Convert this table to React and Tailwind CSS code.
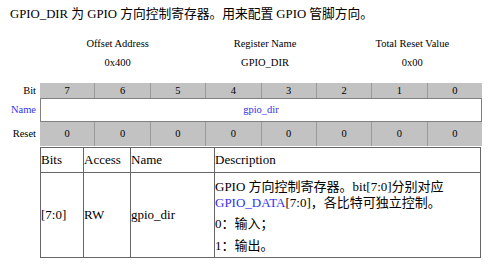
const FONT = { fontFamily: '"Liberation Serif", "Noto Sans CJK SC", serif' };

const BITS = [7, 6, 5, 4, 3, 2, 1, 0];

function GrayRow({ label, values, className }) {
  return (
    <div className={`flex ${className}`}>
      <div className="flex w-[40px] items-center justify-end pr-[4px] text-[10.5px] text-black">{label}</div>
      <div className="flex w-[442px] bg-[#c2c2c2]">
        {values.map((v, i) => (
          <div
            key={i}
            className={`flex flex-1 items-center justify-center text-[10.5px] text-black ${i > 0 ? 'border-l border-l-[#9a9a9a]' : ''}`}
          >
            {v}
          </div>
        ))}
      </div>
    </div>
  );
}

export default function App() {
  return (
    <div className="h-[269px] w-[500px] overflow-hidden bg-white text-black" style={FONT}>
      <div className="pl-[10px] pt-[6px] text-[12.75px] leading-[16px]">
        GPIO_DIR 为 GPIO 方向控制寄存器。用来配置 GPIO 管脚方向。
      </div>

      <div className="ml-[44px] mt-[15px] grid w-[442px] grid-cols-3 text-center text-[10.5px] leading-[14px]">
        <div>Offset Address</div>
        <div>Register Name</div>
        <div>Total Reset Value</div>
        <div className="mt-[5px]">0x400</div>
        <div className="mt-[5px]">GPIO_DIR</div>
        <div className="mt-[5px]">0x00</div>
      </div>

      <div className="mt-[13px]">
        <GrayRow label="Bit" values={BITS} className="h-[15px]" />
        <div className="flex h-[24px]">
          <div className="flex w-[40px] items-center justify-end pr-[4px] text-[10.5px] text-[#3232f0]">Name</div>
          <div className="flex w-[442px] items-center justify-center border border-[#808080] bg-white text-[10.5px] text-[#3232f0]">
            gpio_dir
          </div>
        </div>
        <GrayRow label="Reset" values={BITS.map(() => 0)} className="h-[24px]" />
      </div>

      <table className="ml-[40px] mt-[1px] w-[440px] table-fixed border-collapse text-[13px] leading-[16px]">
        <colgroup>
          <col className="w-[43px]" />
          <col className="w-[47px]" />
          <col className="w-[84px]" />
          <col className="w-[266px]" />
        </colgroup>
        <thead>
          <tr className="h-[25px]">
            <th className="border border-[#666666] px-0 text-left font-normal">Bits</th>
            <th className="border border-[#666666] px-0 text-left font-normal">Access</th>
            <th className="border border-[#666666] px-0 text-left font-normal">Name</th>
            <th className="border border-[#666666] px-0 text-left font-normal">Description</th>
          </tr>
        </thead>
        <tbody>
          <tr className="h-[85px]">
            <td className="border border-[#666666] align-middle">[7:0]</td>
            <td className="border border-[#666666] align-middle">RW</td>
            <td className="border border-[#666666] align-middle">gpio_dir</td>
            <td className="border border-[#666666] align-top">
              <div className="pt-[6px]">
                GPIO 方向控制寄存器。bit[7:0]分别对应
                <br />
                <span className="text-[#3232f0]">GPIO_DATA</span>[7:0]，各比特可独立控制。
              </div>
              <div className="mt-[5px]">0：输入；</div>
              <div className="mt-[6px]">1：输出。</div>
            </td>
          </tr>
        </tbody>
      </table>
    </div>
  );
}
